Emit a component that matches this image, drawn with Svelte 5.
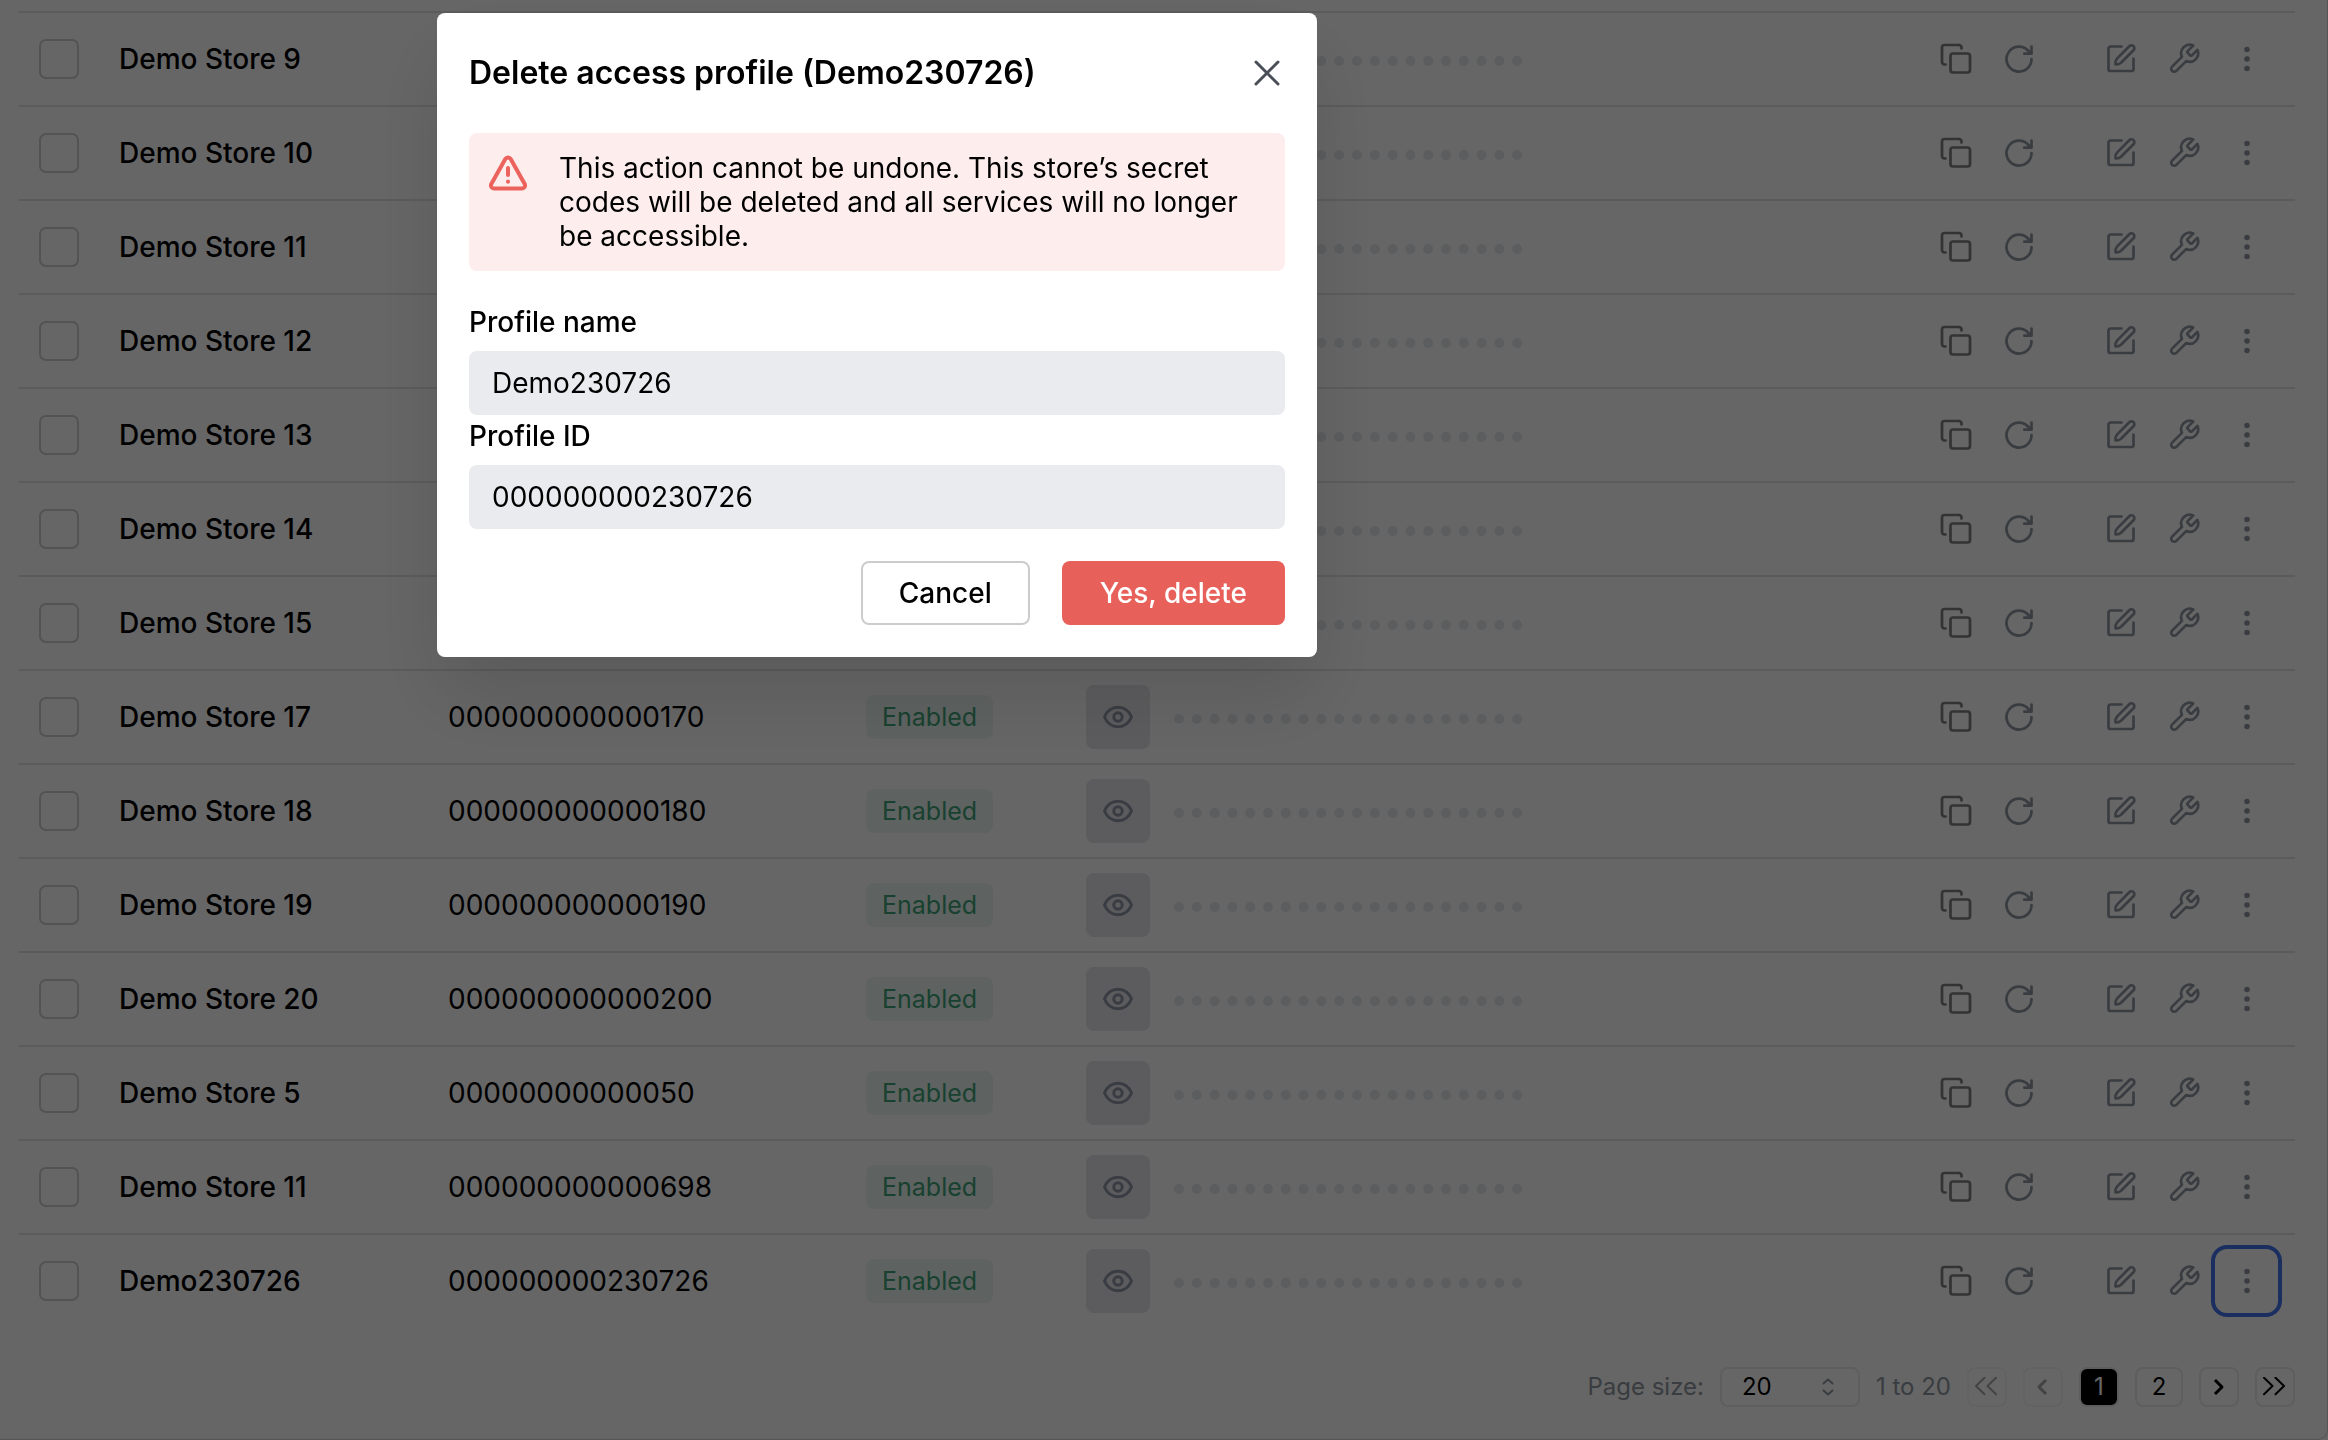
<script lang="ts">
  type Row = { name: string; id: string };

  const rows: Row[] = [
    { name: 'Demo Store 9', id: '000000000000090' },
    { name: 'Demo Store 10', id: '000000000000100' },
    { name: 'Demo Store 11', id: '000000000000110' },
    { name: 'Demo Store 12', id: '000000000000120' },
    { name: 'Demo Store 13', id: '000000000000130' },
    { name: 'Demo Store 14', id: '000000000000140' },
    { name: 'Demo Store 15', id: '000000000000150' },
    { name: 'Demo Store 17', id: '000000000000170' },
    { name: 'Demo Store 18', id: '000000000000180' },
    { name: 'Demo Store 19', id: '000000000000190' },
    { name: 'Demo Store 20', id: '000000000000200' },
    { name: 'Demo Store 5', id: '00000000000050' },
    { name: 'Demo Store 11', id: '000000000000698' },
    { name: 'Demo230726', id: '000000000230726' }
  ];

  const dots = Array.from({ length: 20 }, (_, i) => 5 + i * 17.8);

  let open = $state(true);
  let active = $state(rows.length - 1);
  let profile = $derived(rows[active]);

  function ask(index: number) {
    active = index;
    open = true;
  }

  function close() {
    open = false;
  }
</script>

<main class="card">
  <table>
    <tbody>
      {#each rows as row, i}
        <tr>
          <td class="col-check">
            <input type="checkbox" aria-label="Select {row.name}" />
          </td>
          <td class="col-name">{row.name}</td>
          <td class="col-id">{row.id}</td>
          <td class="col-status"><span class="badge">Enabled</span></td>
          <td class="col-secret">
            <div class="secret">
              <button class="reveal" aria-label="Show secret">
                <svg width="30" height="30" viewBox="0 0 30 30">
                  <path d="M1.500 15C4 9 9 5.300 15 5.300S26 9 28.500 15C26 21 21 24.700 15 24.700S4 21 1.500 15Z" />
                  <circle cx="15" cy="15" r="4.200" />
                </svg>
              </button>
              <svg class="dots" width="350" height="14" viewBox="0 0 350 14" aria-hidden="true">
                {#each dots as x}
                  <circle cx={x} cy="9" r="5" />
                {/each}
              </svg>
            </div>
          </td>
          <td class="col-actions">
            <div class="actions">
              <button class="copy" aria-label="Copy">
                <svg width="32" height="32" viewBox="0 0 32 32">
                  <rect x="10.500" y="10.500" width="19.500" height="19" rx="2.500" />
                  <path d="M5.500 21.500H4.500A2.500 2.500 0 0 1 2 19V4.500A2.500 2.500 0 0 1 4.500 2H19A2.500 2.500 0 0 1 21.500 4.500V5.500" />
                </svg>
              </button>
              <button aria-label="Refresh">
                <svg width="32" height="32" viewBox="0 0 32 32">
                  <path d="M28.500 16A12.500 12.500 0 1 1 25.500 8L28.300 10.600M28.500 3.500V10.700H21.300" />
                </svg>
              </button>
              <button class="edit" aria-label="Edit">
                <svg width="32" height="32" viewBox="0 0 32 32">
                  <path d="M16.500 3.500H5.500A2 2 0 0 0 3.500 5.500V26A2 2 0 0 0 5.500 28H26.500A2 2 0 0 0 28.500 26V15.500" />
                  <path d="M24.300 3.200A2.900 2.900 0 0 1 28.500 7.300L16 19.800C14.500 21.200 12.500 21.500 10.500 21.300C10.300 19.300 10.600 17.200 12 15.600Z" />
                </svg>
              </button>
              <button class="wrench" aria-label="Configure">
                <svg width="34" height="34" viewBox="0 0 24 24">
                  <path d="M14.700 6.300a1 1 0 0 0 0 1.400l1.600 1.600a1 1 0 0 0 1.400 0l3.770-3.770a6 6 0 0 1-7.940 7.940l-6.910 6.910a2.120 2.120 0 0 1-3-3l6.910-6.910a6 6 0 0 1 7.940-7.940l-3.760 3.760z" />
                </svg>
              </button>
              <button
                class="more"
                class:focused={open && i === active}
                aria-label="More actions"
                onclick={() => ask(i)}
              >
                <svg width="32" height="32" viewBox="0 0 32 32">
                  <circle cx="16" cy="6.500" r="2.800" />
                  <circle cx="16" cy="16" r="2.800" />
                  <circle cx="16" cy="25.500" r="2.800" />
                </svg>
              </button>
            </div>
          </td>
        </tr>
      {/each}
    </tbody>
  </table>

  <nav class="pager" aria-label="Pagination">
    <label for="page-size">Page size:</label>
    <div class="select">
      <select id="page-size">
        <option>20</option>
        <option>50</option>
        <option>100</option>
      </select>
      <svg width="12" height="18" viewBox="0 0 12 18">
        <path d="M1.500 5.500L6 1.500L10.500 5.500M1.500 12.500L6 16.500L10.500 12.500" />
      </svg>
    </div>
    <span>1 to 20</span>
    <button class="faded" disabled aria-label="First page">
      <svg width="24" height="20" viewBox="0 0 24 20">
        <path d="M9.500 0.800L1 9L9.500 17.200M21 0.800L12.500 9L21 17.200" />
      </svg>
    </button>
    <button class="faded bold" disabled aria-label="Previous page">
      <svg width="24" height="20" viewBox="0 0 24 20">
        <path d="M15 3L8 10L15 17" />
      </svg>
    </button>
    <button class="current" aria-current="page">1</button>
    <button class="number">2</button>
    <button class="bold" aria-label="Next page">
      <svg width="24" height="20" viewBox="0 0 24 20">
        <path d="M8 3L15 10L8 17" />
      </svg>
    </button>
    <button aria-label="Last page">
      <svg width="24" height="20" viewBox="0 0 24 20">
        <path d="M1 0.800L9.500 9L1 17.200M12.500 0.800L21 9L12.500 17.200" />
      </svg>
    </button>
  </nav>
</main>

{#if open}
  <div class="overlay">
    <div class="modal" role="dialog" aria-modal="true" aria-labelledby="dialog-title">
      <header>
        <h2 id="dialog-title">Delete access profile ({profile.name})</h2>
        <button class="close" aria-label="Close" onclick={close}>
          <svg width="26" height="26" viewBox="0 0 26 26">
            <path d="M2 2L24 24M24 2L2 24" />
          </svg>
        </button>
      </header>

      <div class="alert" role="alert">
        <svg width="38" height="36" viewBox="0 0 38 36">
          <path d="M16.300 4A3.100 3.100 0 0 1 21.700 4L35.700 29A3.100 3.100 0 0 1 33 33.500H5A3.100 3.100 0 0 1 2.300 29Z" />
          <path d="M19 13V20M19 26.500V26.700" />
        </svg>
        <p>
          This action cannot be undone. This store’s secret codes will be deleted and all services
          will no longer be accessible.
        </p>
      </div>

      <div class="field">
        <label for="profile-name">Profile name</label>
        <input id="profile-name" type="text" readonly value={profile.name} />
      </div>
      <div class="field">
        <label for="profile-id">Profile ID</label>
        <input id="profile-id" type="text" readonly value={profile.id} />
      </div>

      <footer>
        <button class="cancel" onclick={close}>Cancel</button>
        <button class="danger" onclick={close}>Yes, delete</button>
      </footer>
    </div>
  </div>
{/if}

<style>
  :global(body) {
    background: #fff;
    color: #000;
    font-family: Inter, 'Liberation Sans', sans-serif;
    font-size: 28px;
    line-height: 34px;
  }

  button,
  input,
  select {
    font: inherit;
    color: inherit;
  }

  button {
    display: flex;
    align-items: center;
    justify-content: center;
    padding: 0;
    border: 0;
    background: none;
    cursor: pointer;
  }

  svg {
    fill: none;
    stroke: currentColor;
    stroke-width: 2;
    stroke-linecap: round;
    stroke-linejoin: round;
  }

  .card {
    box-sizing: border-box;
    padding: 11px 32px 32px 19px;
    border-right: 1px solid #d4d4d4;
    border-bottom: 1px solid #d4d4d4;
    border-bottom-right-radius: 10px;
  }

  table {
    width: 100%;
    border-collapse: separate;
    border-spacing: 0;
    table-layout: fixed;
  }

  td {
    box-sizing: border-box;
    height: 94px;
    padding: 0;
    border-top: 2px solid #e4e4e4;
    vertical-align: middle;
  }

  .col-check {
    width: 100px;
    padding-left: 20px;
  }

  .col-check input {
    display: block;
    appearance: none;
    box-sizing: border-box;
    width: 40px;
    height: 40px;
    margin: 0;
    border: 2px solid #cfcfcf;
    border-radius: 7px;
  }

  .col-name {
    width: 329px;
    font-weight: 500;
  }

  .col-id {
    width: 418px;
  }

  .col-status {
    width: 220px;
  }

  .badge {
    display: inline-block;
    padding: 5px 16px;
    border-radius: 8px;
    background: #ebf6f2;
    color: #3fa377;
    font-size: 25px;
  }

  .secret {
    display: flex;
    align-items: center;
    gap: 24px;
  }

  .reveal {
    width: 64px;
    height: 64px;
    border-radius: 8px;
    background: #e6e6eb;
    color: #8f97a5;
  }

  .reveal svg {
    stroke-width: 3;
  }

  .dots {
    fill: #e4e8ed;
    stroke: none;
  }

  .col-actions {
    width: 400px;
    padding-right: 17px;
  }

  .actions {
    display: flex;
    justify-content: flex-end;
    color: #8f97a1;
  }

  .actions button {
    width: 63px;
    height: 64px;
    border-radius: 12px;
    color: inherit;
  }

  .actions svg {
    stroke-width: 2.7;
  }

  .actions .wrench svg {
    stroke-width: 1.9;
  }

  .actions .copy {
    color: #808080;
  }

  .actions .edit {
    margin-left: 39px;
  }

  .more svg {
    fill: currentColor;
    stroke: none;
  }

  .more.focused {
    outline: 4px solid #4273ee;
  }

  .pager {
    display: flex;
    align-items: center;
    justify-content: flex-end;
    gap: 16px;
    margin-top: 40px;
    color: #8f97a1;
    font-size: 24px;
  }

  .select {
    position: relative;
    display: flex;
  }

  .select select {
    appearance: none;
    box-sizing: border-box;
    width: 140px;
    height: 40px;
    padding: 0 20px;
    border: 2px solid #ececec;
    border-radius: 8px;
    background: none;
    color: #000;
  }

  .select svg {
    position: absolute;
    top: 11px;
    right: 26px;
    pointer-events: none;
  }

  .pager button {
    box-sizing: border-box;
    min-width: 40px;
    height: 40px;
    border: 2px solid #ececec;
    border-radius: 8px;
    color: #000;
  }

  .pager button.faded {
    border-color: #f6f6f6;
    color: #a8a8a8;
  }

  .pager .bold svg {
    stroke-width: 3;
    stroke-linecap: butt;
  }

  .pager button.number {
    min-width: 48px;
  }

  .pager button.current {
    background: #000;
    color: #fff;
  }

  .overlay {
    position: fixed;
    inset: 0;
    padding: 13px 0 0 437px;
    background: rgba(0, 0, 0, 0.6);
  }

  .modal {
    box-sizing: border-box;
    max-width: 880px;
    padding: 32px;
    border-radius: 8px;
    background: #fff;
    box-shadow: 0 40px 80px rgba(0, 0, 0, 0.12);
  }

  header {
    display: flex;
    align-items: center;
    justify-content: space-between;
    height: 56px;
    margin-bottom: 32px;
  }

  h2 {
    margin: 0;
    font-size: 32px;
    font-weight: 600;
    line-height: 40px;
  }

  .close {
    width: 36px;
    height: 36px;
    color: #4a4f57;
  }

  .close svg {
    stroke-width: 3;
  }

  .alert {
    display: flex;
    align-items: flex-start;
    gap: 32px;
    margin-bottom: 34px;
    padding: 18px 32px 18px 20px;
    border-radius: 8px;
    background: #fdeeed;
  }

  .alert svg {
    flex: none;
    margin-top: 4px;
    color: #ec625d;
    stroke-width: 4;
  }

  .alert p {
    margin: 0;
  }

  .field {
    display: flex;
    flex-direction: column;
    gap: 12px;
    margin-bottom: 4px;
  }

  .field label {
    font-weight: 500;
  }

  .field input {
    box-sizing: border-box;
    width: 100%;
    height: 64px;
    padding: 0 23px;
    border: 0;
    border-radius: 8px;
    background: #eaebee;
  }

  footer {
    display: flex;
    justify-content: flex-end;
    gap: 32px;
    margin-top: 32px;
  }

  footer button {
    height: 64px;
    padding: 0 38px;
    border-radius: 8px;
    font-weight: 500;
  }

  .cancel {
    box-sizing: border-box;
    padding: 0 36px;
    border: 2px solid #cccccc;
  }

  .danger {
    background: #e8605a;
    color: #fff;
  }
</style>
